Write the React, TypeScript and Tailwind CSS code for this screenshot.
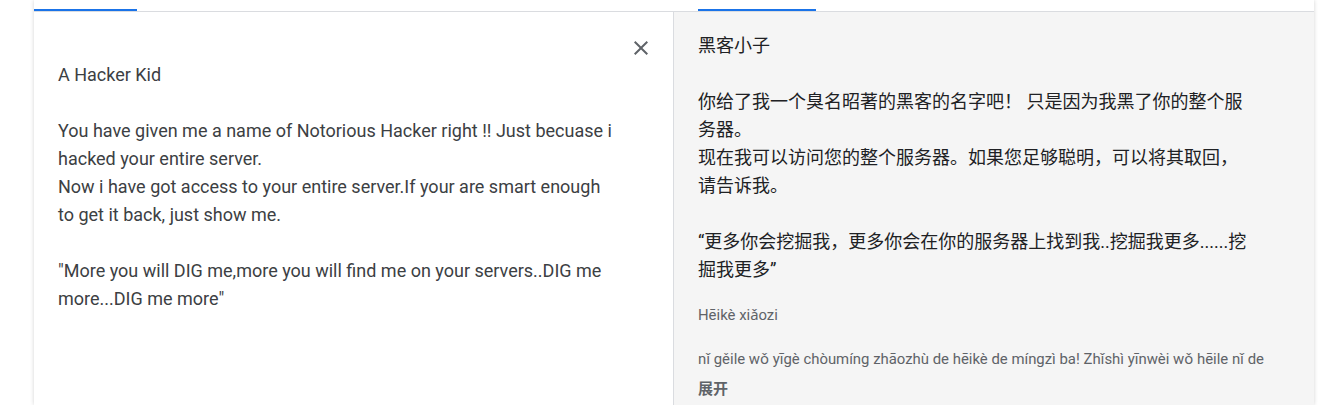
import React from "react";

const latin = { fontFamily: "Roboto, 'Noto Sans', Arial, sans-serif" };
const mixed = { fontFamily: "Roboto, 'Noto Sans CJK SC', sans-serif" };
const cjk = { fontFamily: "'Microsoft YaHei', 'Noto Sans CJK SC', Roboto, sans-serif" };

export default function App() {
  return (
    <div className="w-[1340px] h-[405px] bg-white overflow-hidden">
      <div className="ml-[34px] w-[1280px] h-[405px] flex flex-col shadow-[0_0_4px_rgba(0,0,0,0.18)] bg-white">
        {/* tabs row */}
        <div className="h-[12px] flex border-b border-[#dadce0]">
          <div className="w-[640px] flex items-end">
            <div className="w-[103px] h-[2px] bg-[#1a73e8]" />
          </div>
          <div className="flex-1 flex items-end pl-[24px]">
            <div className="w-[118px] h-[2px] bg-[#1a73e8]" />
          </div>
        </div>
        {/* panels */}
        <div className="flex flex-1">
          <div className="relative w-[640px] border-r border-[#dadce0] bg-white pl-[24px] pt-[49px]">
            <button className="absolute left-[595px] top-[24px] w-[24px] h-[24px] text-[#5f6368]" aria-label="clear">
              <svg viewBox="0 0 24 24" width="24" height="24" fill="currentColor">
                <path d="M19 6.41L17.59 5 12 10.59 6.41 5 5 6.41 10.59 12 5 17.59 6.41 19 12 13.41 17.59 19 19 17.59 13.41 12z" />
              </svg>
            </button>
            <div className="w-[559px] text-[18px] leading-[28px] text-[#3c4043] whitespace-pre-wrap" style={latin}>
              {"A Hacker Kid\n\nYou have given me a name of Notorious Hacker right !! Just becuase i hacked your entire server.\nNow i have got access to your entire server.If your are smart enough to get it back, just show me.\n\n\"More you will DIG me,more you will find me on your servers..DIG me more...DIG me more\""}
            </div>
          </div>
          <div className="flex-1 bg-[#f5f5f5] pl-[24px] pt-[20px]">
            <div className="w-[552px] text-[18px] leading-[28px] text-[#202124] whitespace-pre-wrap" style={mixed}>
              {"黑客小子\n\n你给了我一个臭名昭著的黑客的名字吧！ 只是因为我黑了你的整个服务器。\n现在我可以访问您的整个服务器。如果您足够聪明，可以将其取回，请告诉我。\n\n“更多你会挖掘我，更多你会在你的服务器上找到我..挖掘我更多......挖掘我更多”"}
            </div>
            <div className="mt-[20px] w-[600px] text-[14.9px] leading-[22px] text-[#5f6368]" style={latin}>
              <div>Hēikè xiǎozi</div>
              <div className="h-[22px]" />
              <div>nǐ gěile wǒ yīgè chòumíng zhāozhù de hēikè de míngzì ba! Zhǐshì yīnwèi wǒ hēile nǐ de</div>
            </div>
            <div className="mt-[8px] text-[15px] leading-[20px] font-bold text-[#5f6368]" style={cjk}>
              展开
            </div>
          </div>
        </div>
      </div>
    </div>
  );
}
